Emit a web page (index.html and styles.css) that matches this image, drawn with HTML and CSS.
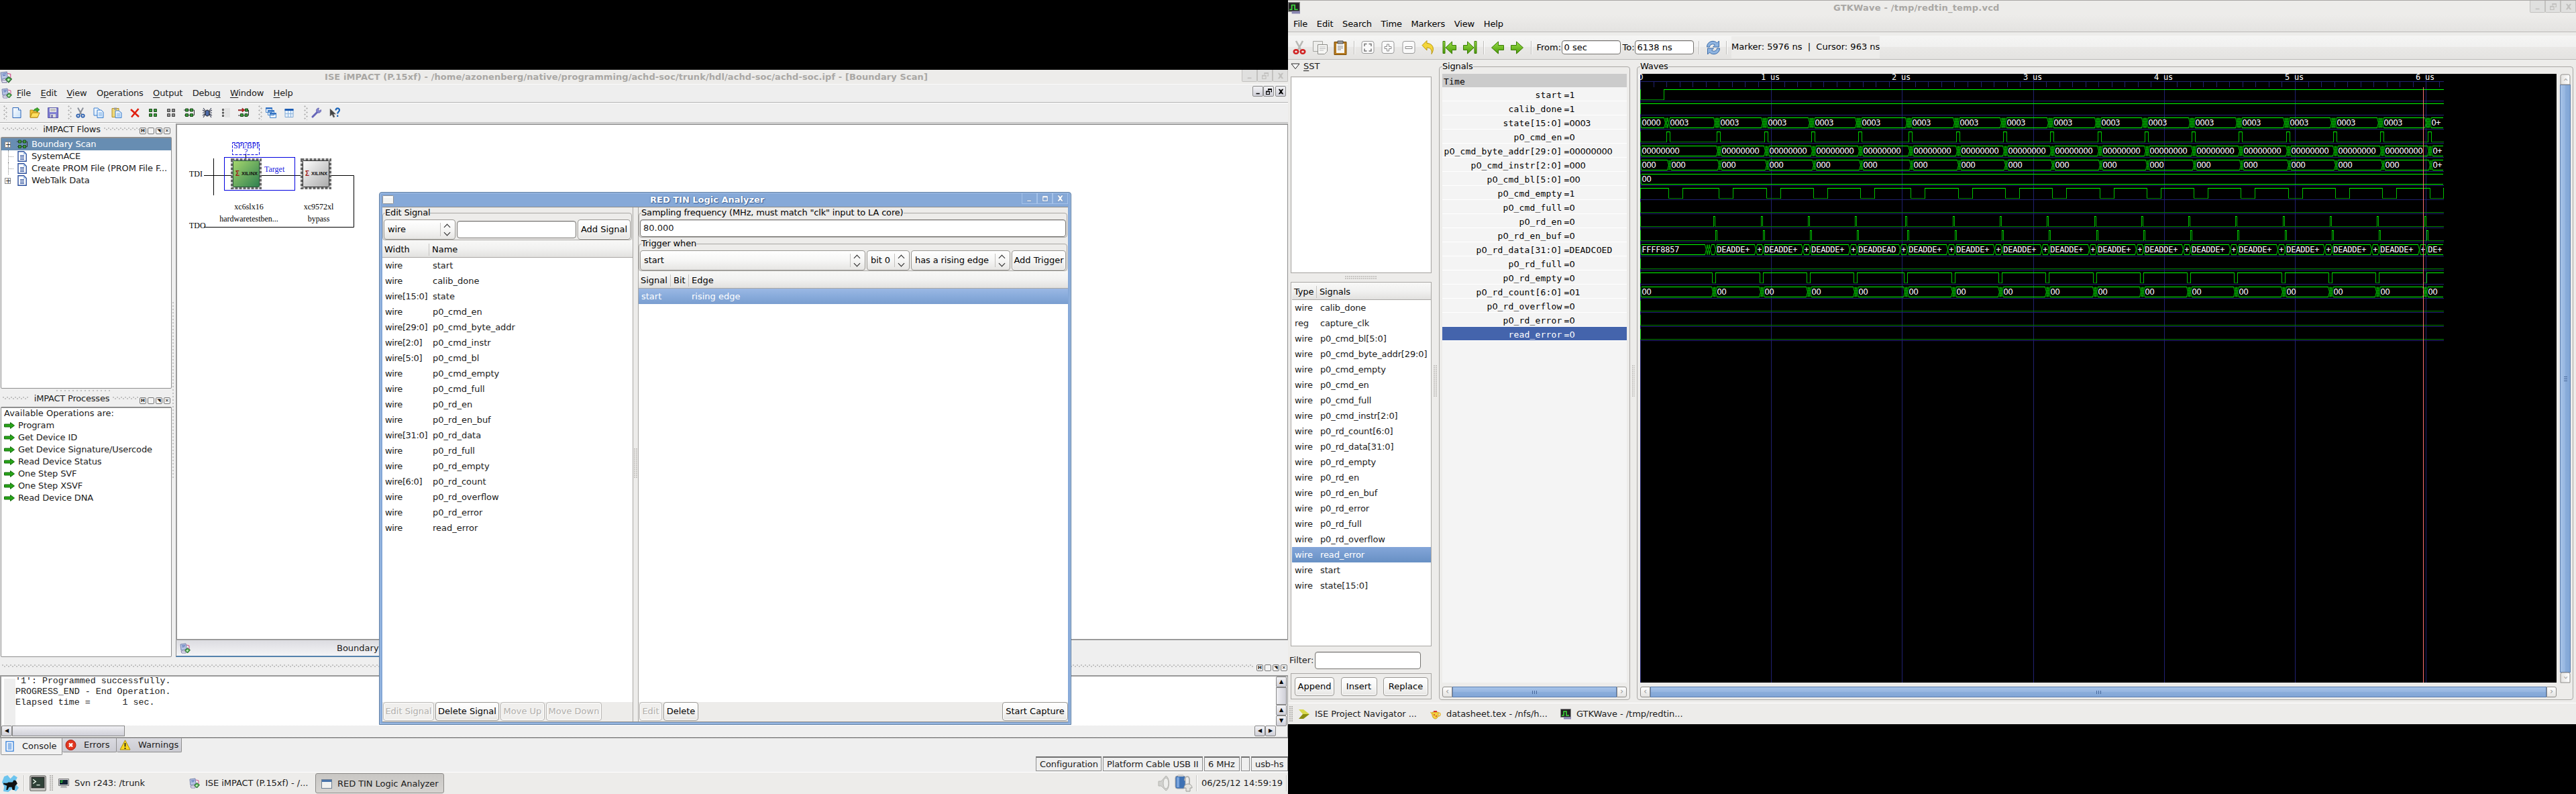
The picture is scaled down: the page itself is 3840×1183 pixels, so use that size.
FILE: index.html
```html
<!DOCTYPE html>
<html lang="en">

<head>
    <meta charset="UTF-8">
    <meta name="viewport" content="width=device-width, initial-scale=1.0">

    <title>Logic Analyzer Desktop</title>

    <link rel="stylesheet" href="styles.css">
</head>

<body>
    <!-- Icon sheet -->
    <svg class="sprite" width="0" height="0">
        <defs>
            <linearGradient id="gGreen" x1="0" y1="0" x2="1" y2="1"><stop offset="0" stop-color="#a6d76e"/><stop offset="1" stop-color="#2f8050"/></linearGradient>
            <linearGradient id="gGrey" x1="0" y1="0" x2="1" y2="1"><stop offset="0" stop-color="#ffffff"/><stop offset="1" stop-color="#a9a9a9"/></linearGradient>
            <linearGradient id="gArrow" x1="0" y1="0" x2="0" y2="1"><stop offset="0" stop-color="#9be04a"/><stop offset="1" stop-color="#4a9a06"/></linearGradient>
            <linearGradient id="gPage" x1="0" y1="0" x2="1" y2="1"><stop offset="0" stop-color="#ffffff"/><stop offset="1" stop-color="#c3def8"/></linearGradient>
        </defs>
        <symbol id="i-impact" viewBox="0 0 16 16"><path d="M1 2l8-1 1 8-8 2z" fill="#b9c6e4" stroke="#7480ae"/><path d="M3 4l5-.6M3.4 6l4-.5" stroke="#4f6db4"/><path d="M2 12h7v3H3z" fill="#e8e8f4" stroke="#8a86ac"/><path d="M10 3l4 1v5" fill="none" stroke="#d0508c"/><path d="M7.500 11l4-3.500 4 3-4 4.500z" fill="#52b152" stroke="#24602c"/><path d="M9.500 11.500l2-1.500 1.500 1-2 2z" fill="#d9f2d3"/></symbol>
        <symbol id="i-new" viewBox="0 0 16 16"><path d="M2 .5h8.500l3.500 3.500v11.500H2z" fill="url(#gPage)" stroke="#2c66b8"/><path d="M10.500.5v3.500H14" fill="#fff" stroke="#2c66b8"/></symbol>
        <symbol id="i-open" viewBox="0 0 16 16"><path d="M1 4h4l1 2h6v9H1z" fill="#f0c030" stroke="#b48510"/><path d="M1 15l3-7h11l-3 7z" fill="#ffe060" stroke="#b48510"/><path d="M6 5c1-3 3-3.500 5-3.500V0l4 3.500-4 3.500V5C9 4.500 7.500 4.500 6 5z" fill="#3daa26" stroke="#1d6c10" stroke-width=".6"/></symbol>
        <symbol id="i-save" viewBox="0 0 16 16"><path d="M.5.5h15v15H.5z" fill="#8180d2" stroke="#5a58a8"/><path d="M3 1h10v6H3z" fill="#eee"/><path d="M4 3h8M4 5h8" stroke="#999"/><path d="M4 10h8v5H4z" fill="#ddd"/><path d="M5.500 11h2v4h-2z" fill="#5553a0"/></symbol>
        <symbol id="i-cut" viewBox="0 0 16 16"><path d="M4 .5l5.500 10M12 .5L6.500 10.500" stroke="#8a8f99" stroke-width="2"/><circle cx="4.500" cy="12.500" r="2.200" fill="none" stroke="#2a5fb0" stroke-width="1.800"/><circle cx="11.500" cy="12.500" r="2.200" fill="none" stroke="#2a5fb0" stroke-width="1.800"/></symbol>
        <symbol id="i-copy" viewBox="0 0 16 16"><path d="M1 1h6l3 3v8H1z" fill="url(#gPage)" stroke="#3b7fd0"/><path d="M6 4h6l3 3v8.500H6z" fill="url(#gPage)" stroke="#3b7fd0"/><path d="M8 8h5M8 10h5M8 12h5" stroke="#7fb2e8"/></symbol>
        <symbol id="i-paste" viewBox="0 0 16 16"><path d="M1 1.500h10v13H1z" fill="#f0d878" stroke="#b09028"/><path d="M4 .5h4v3H4z" fill="#999"/><path d="M6 5h5l4 3v7.500H6z" fill="url(#gPage)" stroke="#3b7fd0"/><path d="M8 9h5M8 11h5M8 13h5" stroke="#7fb2e8"/></symbol>
        <symbol id="i-del" viewBox="0 0 16 16"><path d="M2 3l12 11M13.500 2L3 14.500" stroke="#e02010" stroke-width="2.600"/></symbol>
        <symbol id="i-sq" viewBox="0 0 16 16"><path d="M2.500 2.500h4v4h-4zM9.500 2.500h4v4h-4zM2.500 9.500h4v4h-4zM9.500 9.500h4v4h-4z" fill="#3c9a3c" stroke="#1c4a1c"/></symbol>
        <symbol id="i-sqg" viewBox="0 0 16 16"><path d="M2.500 2.500h4v4h-4zM9.500 2.500h4v4h-4zM2.500 9.500h4v4h-4zM9.500 9.500h4v4h-4z" fill="#8a8a8a" stroke="#444"/></symbol>
        <symbol id="i-chain" viewBox="0 0 16 16"><path d="M0 4h15.500v7.500H1" fill="none" stroke="#333"/><path d="M2.500 2h4v4h-4zM9.500 2h4v4h-4zM2.500 9.500h4v4h-4zM9.500 9.500h4v4h-4z" fill="#3c9a3c" stroke="#1c4a1c"/></symbol>
        <symbol id="i-bug" viewBox="0 0 16 16"><path d="M2 1l4 5M14 1l-4 5M1 8h14M2 15l4-6M14 15l-4-6M1 4l5 3M15 4l-5 3M1 12l5-3M15 12l-5-3" stroke="#343a50" stroke-width="1.100"/><ellipse cx="8" cy="8.500" rx="3" ry="4.500" fill="#4d6aa8" stroke="#222"/></symbol>
        <symbol id="i-list" viewBox="0 0 16 16"><path d="M7 1h8v14H7z" fill="#e3e3e3"/><path d="M3.500 2.500h2v2h-2zM3.500 7h2v2h-2zM3.500 11.500h2v2h-2z" fill="#fff" stroke="#333"/></symbol>
        <symbol id="i-chain2" viewBox="0 0 16 16"><path d="M0 3.500h6V1l4 3-4 3V4.800H0z" fill="#c82020" stroke="#701010" stroke-width=".6"/><path d="M0 12h15.500V4" fill="none" stroke="#333"/><path d="M10.500 2h4v4h-4zM3.500 9.500h4v4h-4zM10 9.500h4v4h-4z" fill="#3c9a3c" stroke="#1c4a1c"/></symbol>
        <symbol id="i-wins" viewBox="0 0 16 16"><path d="M.5.5h9v7h-9zM3.500 4.500h9v7h-9zM6.500 8.500h9v7h-9z" fill="#eaf3fd" stroke="#4a88cc"/><path d="M0 1.500h10M3 5.500h10M6 9.500h10" stroke="#2c6cc0" stroke-width="2"/></symbol>
        <symbol id="i-layout" viewBox="0 0 16 16"><path d="M2 2.500h12v12H2z" fill="#e8f2fc" stroke="#7fa8d4"/><path d="M1.500 3.500h13" stroke="#1c5cb4" stroke-width="3"/><path d="M6.500 5v9M10.500 5v9M2 9.500h12" stroke="#8db4dc"/></symbol>
        <symbol id="i-wrench" viewBox="0 0 16 16"><path d="M2 14l7-7" stroke="#6565b8" stroke-width="3" stroke-linecap="round"/><path d="M14.500 3.500A3.600 3.600 0 1 1 11.500 1l-1 3 1.500 1.200z" fill="#8585d0" stroke="#5555a4" stroke-width=".7"/></symbol>
        <symbol id="i-help" viewBox="0 0 16 16"><path d="M1 2v11l3-2.500L6 15l2-1-2-4h3.500z" fill="#444" stroke="#777" stroke-width=".6"/><path d="M9.500 4.500c0-4 5.500-4 5.500-.5 0 2.500-2.800 2.500-2.800 5.500M12.200 11.500v2.500" fill="none" stroke="#1c64b8" stroke-width="2.200"/></symbol>
        <symbol id="i-doc" viewBox="0 0 16 16"><path d="M2 .8h8.500L14.200 4.500v10.700H2z" fill="#fff" stroke="#2a4e9c" stroke-width="1.400"/><path d="M10 1v4h4" fill="#9ebee8"/><path d="M5 6.500h6M5 8.500h6M5 10.500h6M5 12.500h6" stroke="#2a4e9c"/></symbol>
        <symbol id="i-go" viewBox="0 0 16 10"><path d="M.5 3h9V.5l6 4.500-6 4.500V7h-9z" fill="#28a518" stroke="#136a0c"/></symbol>
        <symbol id="i-console" viewBox="0 0 16 16"><path d="M2.500.8h11v14.400h-11z" fill="#fff" stroke="#2c7ad8" stroke-width="1.300"/><path d="M5 4h6M5 6h6M5 8h6M5 10h6M5 12h6" stroke="#2c7ad8"/></symbol>
        <symbol id="i-err" viewBox="0 0 16 16"><circle cx="8" cy="8" r="7.500" fill="#e23620" stroke="#a81c10"/><path d="M5.500 5.500l5 5M10.500 5.500l-5 5" stroke="#fff" stroke-width="2.400"/></symbol>
        <symbol id="i-warn" viewBox="0 0 16 16"><path d="M8 .8L15.500 15H.5z" fill="#fbd91c" stroke="#a88a10"/><path d="M8 5v5.500M8 12v2" stroke="#222" stroke-width="1.800"/></symbol>
        <symbol id="i-mouse" viewBox="0 0 24 24"><path d="M3 2l5-2 4 5 5-5 5 3-4 8 6 7-4 5-6-3-5 4-7-1 1-7-3-6z" fill="#6cc4ee"/><path d="M2 11c3 0 5 1 7-1h6l2-3 3 1 2 4-3 3-1 6h-3l-1-4h-4l-2 4H6l1-6-5-2z" fill="#111"/></symbol>
        <symbol id="i-term" viewBox="0 0 24 24"><rect x=".7" y=".7" width="22.600" height="21.600" rx="2" fill="#c8c8c4" stroke="#6a6a66"/><path d="M3 3h18v15H3z" fill="#2f4237" stroke="#222"/><path d="M5 6l4 3-4 3M10 14h5" fill="none" stroke="#e8f4e8" stroke-width="1.300"/></symbol>
        <symbol id="i-term2" viewBox="0 0 16 16"><path d="M.5 1.500h15v10H.5z" fill="#ddd" stroke="#777"/><path d="M2 3h12v7H2z" fill="#123"/><path d="M3 4.500h4M3 6.500h3" stroke="#3e3"/><path d="M4 12h8l1 3H3z" fill="#bbb"/></symbol>
        <symbol id="i-win" viewBox="0 0 16 14"><rect x=".5" y=".5" width="15" height="13" fill="#f2f2f0" stroke="#6d7f94"/><path d="M1 2.500h14" stroke="#4a74ac" stroke-width="3"/></symbol>
        <symbol id="i-blank" viewBox="0 0 17 13"><rect x=".5" y=".5" width="16" height="12" rx="1" fill="#f4f4f2" stroke="#8c9096"/><path d="M2 2.500h13" stroke="#fff" stroke-width="2"/></symbol>
        <symbol id="i-speaker" viewBox="0 0 22 24"><path d="M14 1c6 2 6 20 0 22l-7-7H3V9h4z" fill="#d2d2cf" stroke="#b4b4b0"/><ellipse cx="14" cy="12" rx="4" ry="8" fill="#eeeeec" stroke="#b4b4b0"/></symbol>
        <symbol id="i-batt" viewBox="0 0 28 26"><rect x="2" y="2" width="15" height="19" rx="3" fill="#3f72b4" stroke="#aaa"/><path d="M6 0h8v3H6z" fill="#ccc"/><path d="M4 4h4v15H4z" fill="#79a4dc"/><path d="M16 9c0-8 8-8 7 0v6" fill="none" stroke="#b4b4b0" stroke-width="2"/><path d="M15 20c0-4 3-6 6-6s6 2 6 6h-3v5h-6v-5z" fill="#e4e4e0" stroke="#9a9a96"/></symbol>
        <symbol id="i-gtkw" viewBox="0 0 16 16"><path d="M.5.5h15v12H.5z" fill="#222" stroke="#888"/><path d="M2 10h3V4h4v6h4" fill="none" stroke="#3ddc3d" stroke-width="1.500"/><path d="M5 12h11v3.500H5z" fill="#8a86b0"/></symbol>
        <symbol id="i-ise" viewBox="0 0 16 16"><path d="M0 1h7l9 7H6z" fill="#d8d84c"/><path d="M6 8h10l-9 7H0z" fill="#8a8c10"/></symbol>
        <symbol id="i-tea" viewBox="0 0 16 16"><path d="M3 5h9c1 5-1 10-4.500 10S2 10 3 5z" fill="#f4cf3c" stroke="#b88c1c" stroke-width=".7"/><path d="M12 6c4-1 4 5 0 5M3 8L.5 5" fill="none" stroke="#e8b830" stroke-width="1.400"/><path d="M5 3h5v2H5z" fill="#d83a2a"/><circle cx="6" cy="9" r="1" fill="#c33"/><circle cx="9" cy="11" r="1" fill="#c33"/></symbol>
        <symbol id="t-cut" viewBox="0 0 22 22"><path d="M6 1l7 13M16 1L9 14" stroke="#b8b8b4" stroke-width="2.600"/><ellipse cx="6" cy="17" rx="3.200" ry="2.800" fill="none" stroke="#d02020" stroke-width="2.600"/><ellipse cx="16" cy="17" rx="3.200" ry="2.800" fill="none" stroke="#d02020" stroke-width="2.600"/></symbol>
        <symbol id="t-copy" viewBox="0 0 22 22"><path d="M.5 1.500h14v15H.5z" fill="#eeeeec" stroke="#a4a4a0"/><path d="M7.500 6.500h14v10l-4 4h-10z" fill="#f6f6f4" stroke="#8c8c88"/><path d="M10 10h9M10 12.500h9M10 15h6" stroke="#bbb"/></symbol>
        <symbol id="t-paste" viewBox="0 0 22 22"><path d="M2 2.500h18v19H2z" fill="#b87c20" stroke="#7a4c08"/><path d="M5 5h12v14H5z" fill="#f6f6f4"/><path d="M7 1h8v4H7z" fill="#999" stroke="#555"/><path d="M7 9h8M7 11.500h8M7 14h5" stroke="#888"/></symbol>
        <symbol id="t-fit" viewBox="0 0 22 22"><rect x="2" y="1.500" width="18" height="18" rx="3" fill="#fafafa" stroke="#999"/><path d="M6 9V5.500h3.500M12.500 5.500H16V9M16 12.500V16h-3.500M9.500 16H6v-3.500" fill="none" stroke="#777" stroke-width="1.500"/></symbol>
        <symbol id="t-plus" viewBox="0 0 22 22"><rect x="2" y="1.500" width="18" height="18" rx="3" fill="#fafafa" stroke="#999"/><path d="M9.500 6h3v3.500H16v3h-3.500V16h-3v-3.500H6v-3h3.500z" fill="#fff" stroke="#888"/></symbol>
        <symbol id="t-minus" viewBox="0 0 22 22"><rect x="2" y="1.500" width="18" height="18" rx="3" fill="#fafafa" stroke="#999"/><path d="M6 9.500h10v3H6z" fill="#fff" stroke="#888"/></symbol>
        <symbol id="t-undo" viewBox="0 0 22 22"><path d="M1 7.500L8 .5V4.500c9 0 12 8 7 16 1-7-2-9.500-7-9.500v4z" fill="#f4d63a" stroke="#b8960c"/></symbol>
        <symbol id="t-right" viewBox="0 0 22 22"><path d="M1.500 7.500h8V2l10 9-10 9v-5.500h-8z" fill="url(#gArrow)" stroke="#3a7a04"/></symbol>
        <symbol id="t-left" viewBox="0 0 22 22"><path d="M20.500 7.500h-8V2l-10 9 10 9v-5.500h8z" fill="url(#gArrow)" stroke="#3a7a04"/></symbol>
        <symbol id="t-first" viewBox="0 0 22 22"><path d="M1 1.500h3v18H1zM20.500 7.500h-6V2L5 11l9.500 9v-5.500h6z" fill="url(#gArrow)" stroke="#3a7a04"/></symbol>
        <symbol id="t-last" viewBox="0 0 22 22"><path d="M18 1.500h3v18h-3zM1.500 7.500h6V2L17 11l-9.500 9v-5.500h-6z" fill="url(#gArrow)" stroke="#3a7a04"/></symbol>
        <symbol id="t-reload" viewBox="0 0 22 22"><path d="M1.500 10c0-9 11-11 15-6l3-3v9h-9l3-3c-4-3-8 0-8 3zM20.500 12c0 9-11 11-15 6l-3 3v-9h9l-3 3c4 3 8 0 8-3z" fill="#8fb4e0" stroke="#3c6ca8"/></symbol>
        <symbol id="b-min" viewBox="0 0 12 12"><path d="M2 9h7v2H2z"/></symbol>
        <symbol id="b-res" viewBox="0 0 12 12"><path d="M4 0h8v7H9.500V5.500h1V2.500H5.500V4H4zM0 4.500h8V12H0zm1.500 2.500v3.500h5V7z" fill-rule="evenodd"/></symbol>
        <symbol id="b-max" viewBox="0 0 12 12"><path d="M2 2h9v9H2zm2 3v4h5V5z" fill-rule="evenodd"/></symbol>
        <symbol id="b-x" viewBox="0 0 12 12"><path d="M1 1h3l2 2.500L8 1h3L7.700 6 11 11H8L6 8.500 4 11H1l3.300-5z"/></symbol>
    </svg>

    <!-- Left monitor -->
    <div class="monitor monitor-left">
        <div class="win-title">
            <svg class="app-icon"><use href="#i-impact"/></svg>
            <span class="win-caption impact-caption">ISE iMPACT (P.15xf) - /home/azonenberg/native/programming/achd-soc/trunk/hdl/achd-soc/achd-soc.ipf - [Boundary Scan]</span>
            <div class="win-buttons"><i><svg><use href="#b-min"/></svg></i><i><svg><use href="#b-res"/></svg></i><i><svg><use href="#b-x"/></svg></i></div>
        </div>
        <div class="qt-menu">
            <svg class="menu-icon"><use href="#i-impact"/></svg>
            <span><u>F</u>ile</span><span><u>E</u>dit</span><span><u>V</u>iew</span><span>O<u>p</u>erations</span><span><u>O</u>utput</span><span>Debu<u>g</u></span><span><u>W</u>indow</span><span><u>H</u>elp</span>
            <div class="mdi-buttons"><i><svg><use href="#b-min"/></svg></i><i><svg><use href="#b-res"/></svg></i><i class="last"><svg><use href="#b-x"/></svg></i></div>
        </div>
        <div class="qt-toolbar">
            <b class="grip first"></b>
            <svg><use href="#i-new"/></svg><svg><use href="#i-open"/></svg><svg><use href="#i-save"/></svg>
            <b class="grip"></b>
            <svg><use href="#i-cut"/></svg><svg><use href="#i-copy"/></svg><svg><use href="#i-paste"/></svg><svg><use href="#i-del"/></svg><svg><use href="#i-sq"/></svg><svg><use href="#i-sqg"/></svg><svg><use href="#i-chain"/></svg><svg><use href="#i-bug"/></svg><svg><use href="#i-list"/></svg><svg><use href="#i-chain2"/></svg>
            <b class="grip"></b>
            <svg><use href="#i-wins"/></svg><svg><use href="#i-layout"/></svg>
            <b class="grip"></b>
            <svg><use href="#i-wrench"/></svg><svg><use href="#i-help"/></svg>
        </div>

        <div class="workspace">
            <div class="docks">
                <div class="dock-head"><b class="dots"></b><span>iMPACT Flows</span><b class="dots"></b><div class="dock-btns"><i>H</i><i></i><i>◥</i><i>✕</i></div></div>
                <div class="dock-box flows">
                    <div class="tree-row selected"><em>+</em><svg><use href="#i-chain"/></svg>Boundary Scan</div>
                    <div class="tree-row"><em class="leaf"></em><svg><use href="#i-doc"/></svg>SystemACE</div>
                    <div class="tree-row"><em class="leaf"></em><svg><use href="#i-doc"/></svg>Create PROM File (PROM File F...</div>
                    <div class="tree-row"><em>+</em><svg><use href="#i-doc"/></svg>WebTalk Data</div>
                </div>
                <div class="dock-handle"><b class="dots"></b></div>
                <div class="dock-head"><b class="dots"></b><span>iMPACT Processes</span><b class="dots"></b><div class="dock-btns"><i>H</i><i></i><i>◥</i><i>✕</i></div></div>
                <div class="dock-box processes">
                    <div class="proc-title">Available Operations are:</div>
                    <div class="proc-row"><svg><use href="#i-go"/></svg>Program</div>
                    <div class="proc-row"><svg><use href="#i-go"/></svg>Get Device ID</div>
                    <div class="proc-row"><svg><use href="#i-go"/></svg>Get Device Signature/Usercode</div>
                    <div class="proc-row"><svg><use href="#i-go"/></svg>Read Device Status</div>
                    <div class="proc-row"><svg><use href="#i-go"/></svg>One Step SVF</div>
                    <div class="proc-row"><svg><use href="#i-go"/></svg>One Step XSVF</div>
                    <div class="proc-row"><svg><use href="#i-go"/></svg>Read Device DNA</div>
                </div>
            </div>
            <div class="v-splitter"><b></b></div>
            <div class="mdi">
                <div class="mdi-canvas">
                    <!-- JTAG chain -->
                    <svg class="chain" width="300" height="170" viewBox="264 186 300 170">
                        <g fill="none" stroke="#000">
                            <path d="M304 261.500h144M318.500 236v55M493 261.500h34.500v77H304M366.500 230v6"/>
                            <rect x="334.500" y="234.500" width="105" height="49" stroke="#0000e0"/>
                            <rect x="346.500" y="212.500" width="40" height="18" stroke="#0000e0" stroke-dasharray="4 2"/>
                        </g>
                        <g>
                            <rect x="345.500" y="237.500" width="43" height="43" fill="#ddd" stroke="#666" stroke-width="3" stroke-dasharray="4 2"/>
                            <rect x="347.500" y="239.500" width="39" height="39" rx="1" fill="url(#gGreen)" stroke="#285838"/>
                            <rect x="449.500" y="237.500" width="43" height="43" fill="#ddd" stroke="#666" stroke-width="3" stroke-dasharray="4 2"/>
                            <rect x="451.500" y="239.500" width="39" height="39" rx="1" fill="url(#gGrey)" stroke="#333"/>
                        </g>
                        <g class="chip-text">
                            <text x="351" y="262" class="sigma">Σ</text><text x="360" y="261" class="logo" textLength="24" lengthAdjust="spacingAndGlyphs">XILINX</text>
                            <text x="455" y="262" class="sigma">Σ</text><text x="464" y="261" class="logo" textLength="24" lengthAdjust="spacingAndGlyphs">XILINX</text>
                        </g>
                        <g class="chain-text">
                            <text x="282" y="263">TDI</text><text x="282" y="340">TDO</text>
                            <text x="394" y="256" fill="#2020e0">Target</text>
                            <text x="348" y="221" fill="#2020e0" textLength="38">SPI/BPI</text><text x="364" y="230" fill="#2020e0">?</text>
                            <text x="371" y="312" text-anchor="middle">xc6slx16</text><text x="371" y="330" text-anchor="middle">hardwaretestben...</text>
                            <text x="475" y="312" text-anchor="middle">xc9572xl</text><text x="475" y="330" text-anchor="middle">bypass</text>
                        </g>
                    </svg>
                </div>
                <div class="mdi-tabs"><div class="mdi-tab"><svg><use href="#i-impact"/></svg><span>Boundary Scan</span></div></div>
            </div>
        </div>

        <div class="dock-head console-head"><b class="dots"></b><div class="dock-btns"><i>H</i><i></i><i>◥</i><i>✕</i></div></div>
        <div class="console">
            <div class="console-main">
                <div class="console-body">
                    <div class="gutter"></div>
<pre>'1': Programmed successfully.
PROGRESS_END - End Operation.
Elapsed time =      1 sec.</pre>
                </div>
                <div class="qt-hscroll"><i>◀</i><b></b><s></s><i>◀</i><i>▶</i></div>
            </div>
            <div class="qt-vscroll"><i>▲</i><b></b><i>▲</i><i>▼</i></div>
        </div>
        <div class="console-tabs">
            <div class="ctab on"><svg><use href="#i-console"/></svg>Console</div>
            <div class="ctab errors"><svg><use href="#i-err"/></svg>Errors</div>
            <div class="ctab warnings"><svg><use href="#i-warn"/></svg>Warnings</div>
        </div>
        <div class="statusbar">
            <span class="s1">Configuration</span><span class="s2">Platform Cable USB II</span><span class="s3">6 MHz</span><span class="s4"></span><span class="s5">usb-hs</span>
        </div>

        <div class="panel">
            <svg class="big"><use href="#i-mouse"/></svg>
            <b class="vline"></b>
            <svg class="big term"><use href="#i-term"/></svg>
            <b class="gtk-grip"></b>
            <div class="task t1"><svg><use href="#i-term2"/></svg>Svn r243: /trunk</div>
            <div class="task t2"><svg><use href="#i-impact"/></svg>ISE iMPACT (P.15xf) - /...</div>
            <div class="task active"><svg><use href="#i-win"/></svg>RED TIN Logic Analyzer</div>
            <div class="tray">
                <svg class="spk"><use href="#i-speaker"/></svg><svg class="bat"><use href="#i-batt"/></svg>
                <b class="vline"></b><span>06/25/12 14:59:19</span><b class="vline"></b>
            </div>
        </div>
    </div>

    <!-- Right monitor -->
    <div class="monitor monitor-right">
        <div class="win-title gtkw-title">
            <svg class="app-icon"><use href="#i-gtkw"/></svg>
            <span class="win-caption gtkw-caption">GTKWave - /tmp/redtin_temp.vcd</span>
            <div class="win-buttons"><i><svg><use href="#b-min"/></svg></i><i><svg><use href="#b-res"/></svg></i><i><svg><use href="#b-x"/></svg></i></div>
        </div>
        <div class="gtk-menu"><span>File</span><span>Edit</span><span>Search</span><span>Time</span><span>Markers</span><span>View</span><span>Help</span></div>
        <div class="gtk-toolbar">
            <svg><use href="#t-cut"/></svg><svg><use href="#t-copy"/></svg><svg><use href="#t-paste"/></svg>
            <b class="sep"></b>
            <svg><use href="#t-fit"/></svg><svg><use href="#t-plus"/></svg><svg><use href="#t-minus"/></svg><svg><use href="#t-undo"/></svg><svg><use href="#t-first"/></svg><svg><use href="#t-last"/></svg>
            <b class="sep"></b>
            <svg><use href="#t-left"/></svg><svg><use href="#t-right"/></svg>
            <b class="sep"></b>
            <label class="from">From:</label><div class="entry time">0 sec</div>
            <label class="to">To:</label><div class="entry time">6138 ns</div>
            <b class="sep wide"></b>
            <svg><use href="#t-reload"/></svg>
            <b class="sep"></b>
            <label class="marker">Marker: 5976 ns&nbsp; |&nbsp; Cursor: 963 ns</label>
        </div>

        <div class="gtkw-body">
            <div class="sst">
                <div class="sst-head"><svg width="14" height="10" viewBox="0 0 14 10"><path d="M1 1h12L7 8.500z" fill="#fff" stroke="#222"/></svg><span><u>S</u>ST</span></div>
                <div class="sst-box"></div>
                <div class="h-handle"><b></b></div>
                <div class="facs">
                    <div class="list-head"><span class="c-type">Type</span><span>Signals</span></div>
                    <div class="list-row"><span>wire</span>calib_done</div>
                    <div class="list-row"><span>reg</span>capture_clk</div>
                    <div class="list-row"><span>wire</span>p0_cmd_bl[5:0]</div>
                    <div class="list-row"><span>wire</span>p0_cmd_byte_addr[29:0]</div>
                    <div class="list-row"><span>wire</span>p0_cmd_empty</div>
                    <div class="list-row"><span>wire</span>p0_cmd_en</div>
                    <div class="list-row"><span>wire</span>p0_cmd_full</div>
                    <div class="list-row"><span>wire</span>p0_cmd_instr[2:0]</div>
                    <div class="list-row"><span>wire</span>p0_rd_count[6:0]</div>
                    <div class="list-row"><span>wire</span>p0_rd_data[31:0]</div>
                    <div class="list-row"><span>wire</span>p0_rd_empty</div>
                    <div class="list-row"><span>wire</span>p0_rd_en</div>
                    <div class="list-row"><span>wire</span>p0_rd_en_buf</div>
                    <div class="list-row"><span>wire</span>p0_rd_error</div>
                    <div class="list-row"><span>wire</span>p0_rd_full</div>
                    <div class="list-row"><span>wire</span>p0_rd_overflow</div>
                    <div class="list-row selected"><span>wire</span>read_error</div>
                    <div class="list-row"><span>wire</span>start</div>
                    <div class="list-row"><span>wire</span>state[15:0]</div>
                </div>
                <div class="filter"><label>Filter:</label><div class="entry"></div></div>
                <div class="sst-buttons"><div class="btn">Append</div><div class="btn">Insert</div><div class="btn">Replace</div></div>
            </div>
            <div class="v-handle"><b></b></div>
            <fieldset class="signals">
                <legend>Signals</legend>
                <div class="sig-list">
                    <div class="sig-time">Time</div>
                    <div class="sig"><span>start</span>=1</div>
                    <div class="sig"><span>calib_done</span>=1</div>
                    <div class="sig"><span>state[15:0]</span>=0003</div>
                    <div class="sig"><span>p0_cmd_en</span>=0</div>
                    <div class="sig"><span>p0_cmd_byte_addr[29:0]</span>=00000000</div>
                    <div class="sig"><span>p0_cmd_instr[2:0]</span>=000</div>
                    <div class="sig"><span>p0_cmd_bl[5:0]</span>=00</div>
                    <div class="sig"><span>p0_cmd_empty</span>=1</div>
                    <div class="sig"><span>p0_cmd_full</span>=0</div>
                    <div class="sig"><span>p0_rd_en</span>=0</div>
                    <div class="sig"><span>p0_rd_en_buf</span>=0</div>
                    <div class="sig"><span>p0_rd_data[31:0]</span>=DEADC0ED</div>
                    <div class="sig"><span>p0_rd_full</span>=0</div>
                    <div class="sig"><span>p0_rd_empty</span>=0</div>
                    <div class="sig"><span>p0_rd_count[6:0]</span>=01</div>
                    <div class="sig"><span>p0_rd_overflow</span>=0</div>
                    <div class="sig"><span>p0_rd_error</span>=0</div>
                    <div class="sig selected"><span>read_error</span>=0</div>
                </div>
                <div class="gtk-hscroll"><i>‹</i><b><em></em></b><i>›</i></div>
            </fieldset>
            <div class="v-handle second"><b></b></div>
            <fieldset class="waves">
                <legend>Waves</legend>
                <div class="waves-grid">
                    <svg id="waveform" width="1366" height="907" viewBox="0 0 1366 907"></svg>
                    <div class="gtk-vscroll"><i>‹</i><b><em></em></b><i>›</i></div>
                </div>
                <div class="gtk-hscroll"><i>‹</i><b><em></em></b><i>›</i></div>
            </fieldset>
        </div>

        <div class="panel panel-right">
            <b class="gtk-grip"></b>
            <div class="task r1"><svg><use href="#i-ise"/></svg>ISE Project Navigator ...</div>
            <div class="task r2"><svg><use href="#i-tea"/></svg>datasheet.tex - /nfs/h...</div>
            <div class="task r3"><svg><use href="#i-gtkw"/></svg>GTKWave - /tmp/redtin...</div>
        </div>
    </div>

    <!-- RED TIN window -->
    <div class="redtin">
        <div class="redtin-title">
            <svg class="rt-icon"><use href="#i-blank"/></svg>
            <span>RED TIN Logic Analyzer</span>
            <div class="rt-buttons"><i><svg><use href="#b-min"/></svg></i><i><svg><use href="#b-max"/></svg></i><i><svg><use href="#b-x"/></svg></i></div>
        </div>
        <div class="redtin-body">
            <div class="pane pane-left">
                <fieldset class="frame f49">
                    <legend>Edit Signal</legend>
                    <div class="frame-row">
                        <div class="combo c-wire"><span>wire</span><i></i></div>
                        <div class="entry name"></div>
                        <div class="btn add-signal">Add Signal</div>
                    </div>
                </fieldset>
                <div class="list-head"><span class="c-width">Width</span><span>Name</span></div>
                <div class="list">
                    <div class="list-row"><span>wire</span>start</div>
                    <div class="list-row"><span>wire</span>calib_done</div>
                    <div class="list-row"><span>wire[15:0]</span>state</div>
                    <div class="list-row"><span>wire</span>p0_cmd_en</div>
                    <div class="list-row"><span>wire[29:0]</span>p0_cmd_byte_addr</div>
                    <div class="list-row"><span>wire[2:0]</span>p0_cmd_instr</div>
                    <div class="list-row"><span>wire[5:0]</span>p0_cmd_bl</div>
                    <div class="list-row"><span>wire</span>p0_cmd_empty</div>
                    <div class="list-row"><span>wire</span>p0_cmd_full</div>
                    <div class="list-row"><span>wire</span>p0_rd_en</div>
                    <div class="list-row"><span>wire</span>p0_rd_en_buf</div>
                    <div class="list-row"><span>wire[31:0]</span>p0_rd_data</div>
                    <div class="list-row"><span>wire</span>p0_rd_full</div>
                    <div class="list-row"><span>wire</span>p0_rd_empty</div>
                    <div class="list-row"><span>wire[6:0]</span>p0_rd_count</div>
                    <div class="list-row"><span>wire</span>p0_rd_overflow</div>
                    <div class="list-row"><span>wire</span>p0_rd_error</div>
                    <div class="list-row"><span>wire</span>read_error</div>
                </div>
                <div class="btn-row">
                    <div class="btn off w76">Edit Signal</div><div class="btn w95">Delete Signal</div><div class="btn off w66">Move Up</div><div class="btn off w83">Move Down</div>
                </div>
            </div>
            <div class="rt-divider"><b></b></div>
            <div class="pane pane-right">
                <fieldset class="frame f45">
                    <legend>Sampling frequency (MHz, must match "clk" input to LA core)</legend>
                    <div class="frame-row"><div class="entry freq">80.000</div></div>
                </fieldset>
                <fieldset class="frame f49">
                    <legend>Trigger when</legend>
                    <div class="frame-row">
                        <div class="combo c-start"><span>start</span><i></i></div>
                        <div class="combo c-bit"><span>bit 0</span><i></i></div>
                        <div class="combo c-edge"><span>has a rising edge</span><i></i></div>
                        <div class="btn add-trigger">Add Trigger</div>
                    </div>
                </fieldset>
                <div class="list-head"><span class="c-signal">Signal</span><span class="c-bitcol">Bit</span><span>Edge</span></div>
                <div class="list">
                    <div class="list-row selected trig"><span>start</span>rising edge</div>
                </div>
                <div class="btn-row">
                    <div class="btn off w34">Edit</div><div class="btn w52">Delete</div><div class="btn capture">Start Capture</div>
                </div>
            </div>
        </div>
    </div>

    <script src="waves.js"></script>
</body>

</html>
```

FILE: styles.css
```css
/* General styles */
* {
    box-sizing: border-box;
}

body {
    margin: 0;
    width: 3840px;
    height: 1183px;
    background: #000;
    display: flex;
    position: relative;
    overflow: hidden;
    font-family: "DejaVu Sans", sans-serif;
    font-size: 13px;
    line-height: 16px;
    color: #1a1a1a;
    white-space: nowrap;
}

i, em {
    font-style: normal;
}

s {
    text-decoration: none;
}

u {
    text-underline-offset: 2px;
}

svg {
    flex: none;
    display: block;
}

.sprite {
    position: absolute;
}

.monitor {
    width: 1920px;
    height: 1183px;
    display: flex;
    flex-direction: column;
    flex: none;
}

.monitor-left {
    padding-top: 104px;
}

.monitor > div {
    flex: none;
}

/* Window title bars */
.win-title {
    height: 22px;
    background: #edecea;
    border-bottom: 1px solid #fbfbfa;
    display: flex;
    align-items: center;
}

.gtkw-title {
    border-top: 1px solid #a9a7a5;
    border-bottom: 0;
}

.app-icon {
    width: 18px;
    height: 18px;
}

.win-caption {
    font-weight: bold;
    color: #a9a7a4;
}

.impact-caption {
    margin-left: 466px;
    letter-spacing: 0.08px;
}

.gtkw-caption {
    margin-left: 795px;
    letter-spacing: 0.2px;
}

.win-buttons {
    margin-left: auto;
    align-self: flex-start;
    display: flex;
}

.win-buttons i {
    width: 23px;
    height: 18px;
    border: 1px solid #c2c1bf;
    border-top: 0;
    background: #e0e0df;
    border-radius: 0 0 2px 2px;
    display: flex;
    align-items: center;
    justify-content: center;
    fill: #c2c1bf;
}

.win-buttons svg {
    width: 10px;
    height: 10px;
}

/* Qt window */
.qt-menu {
    height: 27px;
    background: #eeeeee;
    border-bottom: 1px solid #b1b1b1;
    display: flex;
    padding-left: 2px;
    align-items: flex-start;
}

.qt-menu > span {
    margin: 5px 14.4px 0 0;
    letter-spacing: -0.17px;
}

.menu-icon {
    width: 16px;
    height: 16px;
    margin: 5px 7px 0 0;
}

.mdi-buttons {
    margin: 2px 3px 0 auto;
    display: flex;
}

.mdi-buttons i {
    width: 16px;
    height: 16px;
    border: 1px solid #8c8c8c;
    border-radius: 2px;
    background: linear-gradient(#f2f2f5, #cfcfd8);
    display: flex;
    align-items: center;
    justify-content: center;
}

.mdi-buttons .last {
    margin-left: 2px;
}

.mdi-buttons svg {
    width: 9px;
    height: 9px;
}

.qt-toolbar {
    height: 30px;
    background: #efefef;
    border-top: 1px solid #fff;
    border-bottom: 1px solid #b1b1b1;
    display: flex;
    align-items: center;
}

.qt-toolbar svg {
    width: 16px;
    height: 16px;
    margin: 0 5.5px;
}

.grip {
    width: 14px;
    height: 22px;
    background: radial-gradient(circle at 1.5px 1.5px, #bdbdbd 1.1px, transparent 1.3px) 8px 0 / 20px 6px repeat-y, radial-gradient(circle at 1.5px 1.5px, #bdbdbd 1.1px, transparent 1.3px) 11px 3px / 20px 6px repeat-y;
}

.grip.first {
    width: 11.5px;
    background-position: 5px 0, 8px 3px;
}

.workspace {
    height: 796px;
    background: #efefef;
    border-top: 1px solid #fff;
    display: flex;
}

.docks {
    width: 256px;
    display: flex;
    flex-direction: column;
}

.dock-head {
    height: 20px;
    display: flex;
    align-items: center;
    padding: 0 2px 3px 4px;
    gap: 4px;
}

.dock-head span {
    margin: 0 1px 0 4px;
    letter-spacing: -0.2px;
}

.dots {
    flex: 1;
    height: 6px;
    background: radial-gradient(circle at 1px 1px, #c2c2c2 1px, transparent 1.3px) 0 0 / 6px 6px, radial-gradient(circle at 1px 1px, #c2c2c2 1px, transparent 1.3px) 3px 2px / 6px 6px;
}

.dock-btns {
    display: flex;
    gap: 2px;
    margin: 5px 0 0 -3px;
}

.dock-btns i {
    width: 10px;
    height: 10px;
    border: 1px solid #777;
    border-radius: 2px;
    font-size: 7px;
    line-height: 8px;
    font-weight: bold;
    text-align: center;
    background: #f3f3f3;
}

.dock-box {
    background: #fff;
    border: 1px solid #8e8e8e;
    border-top: 2px solid #8e8e8e;
    border-radius: 2px;
    margin: 0 0 0 1px;
}

.flows {
    height: 375px;
}

.processes {
    height: 373px;
}

.tree-row {
    height: 18px;
    display: flex;
    align-items: center;
    line-height: 18px;
    letter-spacing: -0.15px;
}

.tree-row.selected {
    background: #678db2;
    color: #fff;
}

.tree-row svg {
    width: 16px;
    height: 16px;
    margin-right: 6px;
}

.tree-row em {
    width: 9px;
    height: 9px;
    margin: 0 9px 0 5px;
    border: 1px solid #8a8a8a;
    background: #fff;
    color: #222;
    font-size: 10px;
    line-height: 7px;
    text-align: center;
}

.tree-row .leaf {
    width: 9px;
    height: 18px;
    margin: 0 4px 0 10px;
    border: 0;
    border-left: 1px dotted #888;
    background: linear-gradient(90deg, #999 50%, transparent 50%) 0 9px / 2px 1px repeat-x;
}

.dock-handle {
    height: 6px;
    padding: 2px 88px 0 84px;
    display: flex;
}

.dock-handle .dots {
    height: 2px;
}

.dock-handle + .dock-head {
    height: 21px;
    padding-bottom: 3px;
}

.proc-title {
    padding: 0 0 0 4px;
    height: 17px;
}

.proc-row {
    height: 18px;
    display: flex;
    align-items: center;
    padding-left: 4px;
    letter-spacing: -0.13px;
}

.proc-row svg {
    width: 16px;
    height: 10px;
    margin-right: 5px;
}

.v-splitter {
    width: 6px;
    padding: 266px 2px 0 1px;
}

.v-splitter b {
    display: block;
    height: 262px;
    background: radial-gradient(circle at 1px 1px, #c2c2c2 1px, transparent 1.3px) 0 0 / 4px 5px;
}

.mdi {
    flex: 1;
    display: flex;
    flex-direction: column;
}

.mdi-canvas {
    height: 769px;
    background: #fff;
    border: 1px solid #8e8e8e;
    border-top: 2px solid #999;
    border-left: 2px solid #999;
}

.chain-text {
    font: 12px "Liberation Serif", serif;
}

.chip-text .sigma {
    font: bold 10px "Liberation Sans", sans-serif;
    fill: #a01818;
}

.chip-text .logo {
    font: bold 8px "Liberation Sans", sans-serif;
    fill: #111;
}

.mdi-tabs {
    height: 26px;
    border-top: 1px solid #a9a9a9;
}

.mdi-tab {
    width: 570px;
    height: 25px;
    border-left: 1px solid #8e8e8e;
    border-bottom: 2px solid #5582ad;
    background: linear-gradient(#dcdce1, #f4f4f6);
    display: flex;
    align-items: center;
    padding-left: 5px;
}

.mdi-tab svg {
    width: 16px;
    height: 16px;
}

.mdi-tab span {
    margin-left: 218px;
}

.console-head {
    height: 27px;
    background: #efefef;
    padding: 0 1px 0 3px;
}

.console-head .dock-btns {
    margin-top: 5px;
    margin-left: 0;
}

.console {
    height: 94px;
    background: #fff;
    border: 2px solid #999;
    border-right-width: 1px;
    display: flex;
}

.console-main {
    flex: 1;
    display: flex;
    flex-direction: column;
}

.console-body {
    height: 73px;
    display: flex;
    padding: 3px 0 0 4px;
}

.gutter {
    width: 17px;
    background: #eee;
}

.console pre {
    margin: -4px 0 0 0;
    font: 13.3px/16px "Liberation Mono", monospace;
    color: #222;
}

.qt-hscroll {
    height: 16px;
    display: flex;
    background: repeating-conic-gradient(#e4e4e4 0 25%, #fafafa 0 50%) 0 0 / 2px 2px;
}

.qt-hscroll i, .qt-vscroll i {
    width: 16px;
    height: 16px;
    border: 1px solid #888;
    border-radius: 2px;
    background: linear-gradient(#f4f4f7, #cfcfd7);
    font-size: 8px;
    line-height: 13px;
    text-align: center;
    color: #000;
}

.qt-hscroll b {
    width: 168px;
    border: 1px solid #888;
    background: linear-gradient(#f0f0f4, #cfcfd7);
}

.qt-hscroll s {
    flex: 1;
}

.qt-vscroll {
    width: 17px;
    background: #efefef;
    display: flex;
    flex-direction: column;
}

.qt-vscroll b {
    height: 26px;
    width: 16px;
    border: 1px solid #888;
    background: linear-gradient(90deg, #f0f0f4, #cfcfd7);
}

.console-tabs {
    height: 27px;
    background: #efefef;
    display: flex;
    align-items: flex-start;
    padding-left: 1px;
}

.ctab {
    height: 21px;
    display: flex;
    align-items: center;
    border: 1px solid #8e8e8e;
    border-top: 0;
    border-left: 0;
    border-radius: 0 0 2px 2px;
    background: linear-gradient(#dadae0, #cbcbd2);
    padding-left: 4px;
    gap: 11px;
}

.ctab svg {
    width: 17px;
    height: 16px;
}

.ctab.on {
    height: 25px;
    width: 92px;
    background: #f1f1f1;
    border-left: 1px solid #8e8e8e;
    gap: 10px;
}

.errors {
    width: 81px;
}

.warnings {
    width: 97px;
}

.statusbar {
    height: 23px;
    background: #efefef;
    display: flex;
    justify-content: flex-end;
    gap: 2px;
}

.statusbar span {
    height: 22px;
    border: 1px solid #8e8e8e;
    border-top: 2px solid #6e6e6e;
    padding: 2px 0 0 5px;
    letter-spacing: -0.1px;
}

.s1 { width: 98px; }
.s2 { width: 149px; }
.s3 { width: 53px; }
.s4 { width: 13px; }
.s5 { width: 55px; }

/* Taskbars */
.panel {
    height: 33px;
    background: #edecea;
    border-top: 1px solid #fff;
    display: flex;
    align-items: center;
    padding-left: 3px;
}

.panel .big {
    width: 25px;
    height: 25px;
}

.panel .term {
    margin-left: 7px;
}

.vline {
    width: 2px;
    height: 24px;
    border-left: 1px solid #c9c8c5;
    border-right: 1px solid #fff;
    margin-left: 7px;
}

.gtk-grip {
    width: 6px;
    height: 24px;
    margin-left: 5px;
    background: radial-gradient(circle at 1px 1px, #b5b3b0 .8px, transparent 1px) 0 0 / 3px 3px;
}

.task {
    display: flex;
    align-items: center;
    gap: 8px;
    letter-spacing: -0.05px;
}

.task svg {
    width: 16px;
    height: 16px;
}

.t1 {
    margin-left: 7px;
    width: 195px;
}

.t2 {
    width: 188px;
}

.task.active {
    width: 192px;
    height: 30px;
    padding: 2px 0 0 8px;
    background: linear-gradient(#c9c7c4, #d6d4d1);
    border: 1px solid #8d8b88;
    border-radius: 3px;
}

.tray {
    margin-left: auto;
    display: flex;
    align-items: center;
    padding-right: 1px;
}

.spk {
    width: 22px;
    height: 24px;
}

.bat {
    width: 28px;
    height: 26px;
    margin-left: 4px;
}

.tray .vline {
    margin: 0 6px 0 5px;
}

.tray .vline:last-child {
    margin-right: 0;
}

.panel-right {
    height: 32px;
    padding-left: 1px;
}

.panel-right .gtk-grip {
    margin-left: 1px;
}

.r1 {
    margin-left: 8px;
    width: 196px;
}

.r2 {
    width: 194px;
}

/* Shared GTK widgets */
.btn {
    height: 28px;
    border: 1px solid #999792;
    border-radius: 4px;
    background: linear-gradient(#ffffff, #f6f6f5 50%, #e6e5e3);
    box-shadow: inset 0 0 0 1px #fff;
    color: #000;
    display: flex;
    align-items: center;
    justify-content: center;
}

.btn.off {
    color: #b0aeab;
    background: #f0efed;
    text-shadow: 1px 1px 0 #fff;
    border-color: #b8b6b3;
}

.entry {
    height: 26px;
    background: #fff;
    border: 1px solid #75736f;
    border-radius: 4px;
    box-shadow: inset 0 1px 0 #ddd;
    padding: 0 4px;
    display: flex;
    align-items: center;
}

.combo {
    height: 30px;
    border: 1px solid #999792;
    border-radius: 4px;
    background: linear-gradient(#ffffff, #f6f6f5 50%, #e6e5e3);
    display: flex;
    align-items: center;
    justify-content: space-between;
    padding-left: 5px;
    color: #000;
    letter-spacing: -0.1px;
}

.combo i {
    width: 22px;
    height: 20px;
    border-left: 1px solid #c4c2bf;
    display: flex;
    flex-direction: column;
    align-items: center;
    justify-content: center;
    gap: 3px;
    padding-right: 3px;
}

.combo i::before, .combo i::after {
    content: "";
    width: 6px;
    height: 6px;
    border: solid #222;
    border-width: 1.5px 0 0 1.5px;
    transform: translateY(1px) rotate(45deg);
}

.combo i::after {
    transform: translateY(-1px) rotate(225deg);
}

fieldset {
    margin: 0;
    min-width: 0;
    border: 1px solid #a9a7a4;
    border-radius: 4px;
    padding: 0;
}

legend {
    padding: 0;
    margin-left: 3px;
    height: 16px;
    color: #000;
    letter-spacing: -0.17px;
}

.list-head {
    height: 26px;
    background: linear-gradient(#f8f8f7, #f1f1f0 50%, #e2e1df);
    border-bottom: 1px solid #a9a7a4;
    display: flex;
    align-items: center;
    padding: 2px 0 0 3px;
    color: #000;
}

.list-head span + span {
    border-left: 1px solid #c6c5c2;
    padding-left: 4px;
    line-height: 18px;
}

.list-row {
    height: 23px;
    display: flex;
    align-items: center;
    padding-left: 4px;
}

/* RED TIN dialog */
.redtin {
    position: absolute;
    left: 565px;
    top: 286px;
    width: 1032px;
    height: 794px;
    background: #86a9d8;
    border: 1px solid #56789f;
    border-radius: 4px 4px 0 0;
    box-shadow: inset 1px 1px 0 #a9c4e8, inset -1px -1px 0 #a9c4e8;
    padding: 0 4px;
}

.redtin-title {
    height: 21px;
    display: flex;
    align-items: center;
}

.redtin-title span {
    margin-left: 382px;
    color: #fff;
    font-weight: bold;
    text-shadow: 0 0 2px #3a6096, 1px 1px 1px #3a6096;
}

.rt-icon {
    width: 17px;
    height: 13px;
}

.rt-buttons {
    margin-left: auto;
    display: flex;
    align-self: flex-start;
}

.rt-buttons i {
    width: 23px;
    height: 17px;
    border: 1px solid #a5c2e8;
    border-top: 0;
    display: flex;
    align-items: center;
    justify-content: center;
    fill: #fff;
}

.rt-buttons svg {
    width: 11px;
    height: 11px;
    stroke: #5c7ca8;
    stroke-width: 0.5px;
}

.redtin-body {
    height: 768px;
    background: #edecea;
    border-top: 1px solid #8f8d8a;
    border-bottom: 1px solid #8f8d8a;
    display: flex;
}

.pane {
    display: flex;
    flex-direction: column;
}

.pane-left {
    width: 374px;
    border-right: 1px solid #a9a7a4;
}

.pane-right {
    width: 641px;
    border-left: 1px solid #a9a7a4;
}

.rt-divider {
    width: 7px;
    padding: 359px 1px 0;
}

.rt-divider b {
    display: block;
    height: 45px;
    background: radial-gradient(circle at 1px 1px, #c6c4c1 .7px, transparent 1px) 0 0 / 3px 3px;
}

.frame {
    margin: 0 1px 0 0;
    flex: none;
}

.frame + .frame {
    margin-top: 1px;
}

.f49 {
    height: 49px;
}

.f45 {
    height: 45px;
}

.frame-row {
    display: flex;
    align-items: center;
    padding: 2px 1px 0;
    gap: 2px;
}

.c-wire { width: 107px; }
.c-start { width: 336px; }
.c-bit { width: 64px; }
.c-edge { width: 148px; }

.entry.name {
    width: 178px;
}

.entry.freq {
    flex: 1;
}

.frame .btn {
    height: 30px;
    flex: 1;
}

.c-width {
    width: 66px;
}

.c-signal {
    width: 44px;
}

.list-head .c-bitcol {
    width: 27px;
}

.list {
    flex: 1;
    background: #fff;
}

.pane-left .list-row span {
    width: 71px;
    letter-spacing: -0.35px;
}

.trig {
    background: linear-gradient(#9bb8e4, #88abdb 50%, #7a9ed0);
    color: #fff;
}

.trig span {
    width: 75px;
}

.btn-row {
    height: 29px;
    display: flex;
    padding: 0 0 0 1px;
    gap: 2px;
}

.w76 { width: 76px; }
.w95 { width: 95px; }
.w66 { width: 66px; }
.w83 { width: 83px; }
.w34 { width: 34px; }
.w52 { width: 52px; }

.capture {
    width: 98px;
    margin-left: auto;
}

/* GTKWave window */
.gtk-menu {
    height: 26px;
    background: linear-gradient(#edecea, #e4e3e1);
    border-bottom: 1px solid #bcbab8;
    display: flex;
    align-items: center;
    padding: 2px 0 0 8px;
    gap: 13.7px;
    color: #000;
    letter-spacing: -0.15px;
}

.gtk-toolbar {
    height: 41px;
    border-top: 5px solid #edecea;
    border-bottom: 1px solid #bcbab8;
    background: linear-gradient(#f5f5f4, #f0f0ef 50%, #e9e8e6 50%, #e4e3e1);
    display: flex;
    align-items: center;
    padding-left: 2px;
    color: #000;
}

.gtk-toolbar svg {
    width: 22px;
    height: 22px;
    margin: 0 4.25px;
}

.sep {
    width: 10px;
    height: 20px;
    background: linear-gradient(90deg, #c0bfbc 50%, #fff 50%) 4px 0 / 2px 20px no-repeat;
}

.sep.wide {
    width: 14px;
    background-position: 7px 0;
}

.from {
    width: 40px;
    padding-left: 3px;
}

.to {
    width: 21px;
    padding-left: 3px;
}

.entry.time {
    width: 88px;
    height: 21px;
    padding: 1px 3px 0;
}

.marker {
    margin-left: 2px;
    background: #edecea;
    height: 33px;
    line-height: 32px;
}

.gtkw-body {
    height: 958px;
    background: #edecea;
    display: flex;
    padding-top: 2px;
}

.sst {
    width: 214px;
    padding-left: 4px;
}

.sst-head {
    height: 23px;
    display: flex;
    gap: 5px;
    align-items: flex-start;
}

.sst-head svg {
    margin-top: 3px;
}

.sst-box {
    height: 293px;
    background: #fff;
    border: 2px solid #a9a7a4;
    outline: 1px solid #f6f6f5;
    outline-offset: -2px;
}

.h-handle {
    height: 13px;
    padding: 4px 81px;
}

.h-handle b {
    display: block;
    height: 5px;
    background: radial-gradient(circle at 1px 1px, #c6c4c1 .7px, transparent 1px) 0 0 / 3px 3px;
}

.facs {
    height: 543px;
    border: 1px solid #a9a7a4;
    background: #fff;
    padding-left: 1px;
    letter-spacing: -0.13px;
}

.facs .list-row span {
    width: 38px;
}

.c-type {
    width: 33px;
}

.facs .selected {
    background: linear-gradient(#84a6d9, #6790c4);
    color: #fff;
}

.filter {
    height: 40px;
    display: flex;
    align-items: center;
    padding-top: 1px;
    margin-left: -2px;
}

.filter label {
    width: 38px;
}

.filter .entry {
    width: 158px;
}

.sst-buttons {
    height: 39px;
    border: 1px solid #a9a7a4;
    display: flex;
    justify-content: space-between;
    padding: 5px 4px 0 5px;
}

.sst-buttons .btn {
    width: 59px;
}

.sst-buttons .btn:nth-child(2) {
    width: 54px;
}

.sst-buttons .btn:nth-child(3) {
    width: 67px;
}

.v-handle {
    width: 11px;
    padding: 453px 3px 0;
}

.v-handle.second {
    width: 10px;
}

.v-handle b {
    display: block;
    height: 48px;
    background: radial-gradient(circle at 1px 1px, #c6c4c1 .7px, transparent 1px) 0 0 / 3px 3px;
}

.signals {
    width: 285px;
    height: 952px;
    padding: 3px 4px 0;
}

.signals legend, .waves legend {
    margin-left: 0;
}

.waves {
    width: 1396px;
    height: 952px;
    padding: 3px 3px 0 4px;
}

.sig-list {
    height: 907px;
    background: #f4f4f4;
    font: 13px/20px "DejaVu Sans Mono", monospace;
    letter-spacing: 0.17px;
    color: #000;
}

.sig-time {
    height: 20px;
    background: #cbcbcb;
    padding: 3px 0 0 2px;
    line-height: 18px;
}

.sig {
    height: 21px;
    border-bottom: 1px solid #fff;
    line-height: 23px;
}

.sig span {
    display: inline-block;
    width: 178.500px;
    margin-right: 3px;
    text-align: right;
}

/* zero without the dot, kept on the mono grid */
.sig b {
    font-family: "DejaVu Sans", sans-serif;
    font-weight: normal;
    letter-spacing: -0.27px;
}

.sig.selected {
    background: #4464ac;
    color: #fff;
}

.waves-grid {
    display: flex;
    justify-content: space-between;
}

#waveform {
    background: #000;
    overflow: visible;
}

#waveform text {
    font: 12px "DejaVu Sans Mono", monospace;
    letter-spacing: -0.22px;
    fill: #fff;
    white-space: pre;
}

#waveform .zero {
    font-family: "DejaVu Sans", sans-serif;
    letter-spacing: -0.63px;
}

.gtk-hscroll {
    height: 16px;
    margin-top: 6px;
    display: flex;
}

.waves .gtk-hscroll {
    width: 1366px;
}

.gtk-hscroll i, .gtk-vscroll i {
    width: 15px;
    height: 16px;
    border: 1px solid #8f8d8a;
    border-radius: 3px 0 0 3px;
    background: linear-gradient(#fff, #e4e3e1);
    color: #999;
    line-height: 12px;
    text-align: center;
}

.gtk-hscroll i:last-child {
    border-radius: 0 3px 3px 0;
}

.gtk-hscroll b {
    flex: 1;
    border: 1px solid #5c7eaf;
    background: linear-gradient(#a6c3e8, #95b5e0 50%, #8aaddb 50%, #82a6d6);
    display: flex;
    justify-content: center;
    align-items: center;
}

.gtk-hscroll em {
    width: 7px;
    height: 5px;
    background: linear-gradient(90deg, #4a6a9c 1px, transparent 1px) 0 0 / 3px 5px;
}

.gtk-vscroll {
    width: 16px;
    height: 906px;
    margin-top: 1px;
    display: flex;
    flex-direction: column;
}

.gtk-vscroll i {
    width: 16px;
    height: 15px;
    transform: rotate(90deg);
}

.gtk-vscroll b {
    flex: 1;
    border: 1px solid #5c7eaf;
    background: linear-gradient(90deg, #a6c3e8, #95b5e0 50%, #8aaddb 50%, #82a6d6);
    display: flex;
    justify-content: center;
    align-items: center;
}

.gtk-vscroll em {
    width: 5px;
    height: 7px;
    background: linear-gradient(#4a6a9c 1px, transparent 1px) 0 0 / 5px 3px;
}
```

FILE: waves.js
```js
// Waveform view, x is in pixels from the left edge of the trace area
const svg = document.getElementById('waveform');
const END = 1198;
const US = 195.2;
const ROWS = 18;
// start of every read command
const CMD = [39, 114, 185, 255, 325, 400, 471, 541, 611, 682, 752, 822, 892, 963, 1033, 1103, 1174];
const READS = CMD.slice(1);

let out = '';

function line(x1, y1, x2, y2, color) {
    out += `<path d="M${x1} ${y1}L${x2} ${y2}" stroke="${color}"/>`;
}

function hline(x1, x2, y, color) {
    out += `<rect x="${x1}" y="${y}" width="${x2 - x1}" height="1" fill="${color}"/>`;
}

function vline(x, y1, y2, color) {
    out += `<rect x="${x}" y="${y1}" width="1" height="${y2 - y1}" fill="${color}"/>`;
}

function label(x, y, text) {
    out += `<text x="${x}" y="${y}">${text.replace(/0+/g, '<tspan class="zero">$&</tspan>')}</text>`;
}

// One bit trace: edges is a list of x where the level flips
function bit(row, level, edges) {
    const hi = 23 + row * 21;
    const lo = hi + 15;
    vline(0, hi, lo + 1, '#00c000');
    let x = 0;
    edges.concat(END).forEach((e, i) => {
        hline(x, e, level ? hi : lo, level ? '#00ff00' : '#008000');
        if (i < edges.length) {
            vline(e, hi, lo + 1, '#00c000');
        }
        level = !level;
        x = e;
    });
}

// Bus trace: changes is a list of [x, text]
function bus(row, changes) {
    const hi = 23 + row * 21;
    const lo = hi + 15;
    changes.forEach(([x, text], i) => {
        const next = i + 1 < changes.length ? changes[i + 1][0] : END;
        if (next - x > 4) {
            hline(x + 2, next - 1, hi, '#00ff00');
            hline(x + 2, next - 1, lo, '#00ff00');
        }
        line(x + 0.5 - (i ? 2 : 0), hi + 0.5, x + 2.5 - (i ? 0 : 1), lo + 0.5, '#00c000');
        if (i) {
            line(x + 2.5, hi + 0.5, x - 1.5, lo + 0.5, '#00c000');
        }
        if (text) {
            label(x + 2.2, hi + 12, text);
        }
    });
}

// Ruler and grid
hline(0, END, 11, '#202070');
for (let i = 0; i * US / 10 < END; i++) {
    vline(Math.round(i * US / 10), 12, 20, '#202070');
}
for (let i = 0; i <= 6; i++) {
    vline(Math.round(i * US), 0, 907, '#202070');
}
for (let r = 0; r < ROWS; r++) {
    hline(0, END, 40 + r * 21, '#202070');
}

const pulses = (list, from, to) => list.flatMap(x => [x + from, x + to]);

bit(0, false, [35]);
bit(1, true, []);
bus(2, [[0, '0000'], [37], [39], [42, '0003']].concat(READS.flatMap((x, i) =>
    [[x - 3], [x - 1], [x + 1], [x + 3, i === 15 ? '0+' : '0003']])));
bit(3, false, pulses(CMD, 0, 5));
bus(4, [[0, '00000000']].concat(READS.flatMap((x, i) =>
    [[x + 1], [x + 3], [x + 5, i === 15 ? '0+' : '00000000']])));
bus(5, [[0, '000']].concat(CMD.flatMap((x, i) =>
    [[x + 3], [x + 5, i === 16 ? '0+' : '000']])));
bus(6, [[0, '00']]);
bit(7, true, pulses(CMD, 3, 24).slice(0, -1).concat(1197));
bit(8, false, []);
bit(9, false, pulses(READS, -5, -3));
bit(10, false, pulses(READS, -2, 0));
const data = [[0, 'FFFF8857'], [98], [101], [104]];
READS.forEach((x, i) => {
    if (i) {
        data.push([x - 13, '+']);
    }
    data.push([x - 2, i === 15 ? 'DE+' : i === 3 ? 'DEADDEAD' : 'DEADDE+']);
});
bus(11, data);
bit(12, false, []);
bit(13, true, pulses(READS, -7, -2));
bus(14, [[0, '00']].concat(READS.flatMap(x => [[x - 6], [x - 4], [x - 2, '00']])));
bit(15, false, []);
bit(16, false, []);
bit(17, false, []);

// Time labels
label(-3, 9, '0');
for (let i = 1; i <= 6; i++) {
    label(Math.round(i * US) - 15, 9, i + ' us');
}

// Marker
vline(1167, 20, 907, '#ff7070');

svg.innerHTML = out;

// Plain zeros in the signal list
document.querySelectorAll('.sig').forEach(row => {
    row.innerHTML = row.innerHTML.replace(/0+/g, '<b>$&</b>');
});
```
